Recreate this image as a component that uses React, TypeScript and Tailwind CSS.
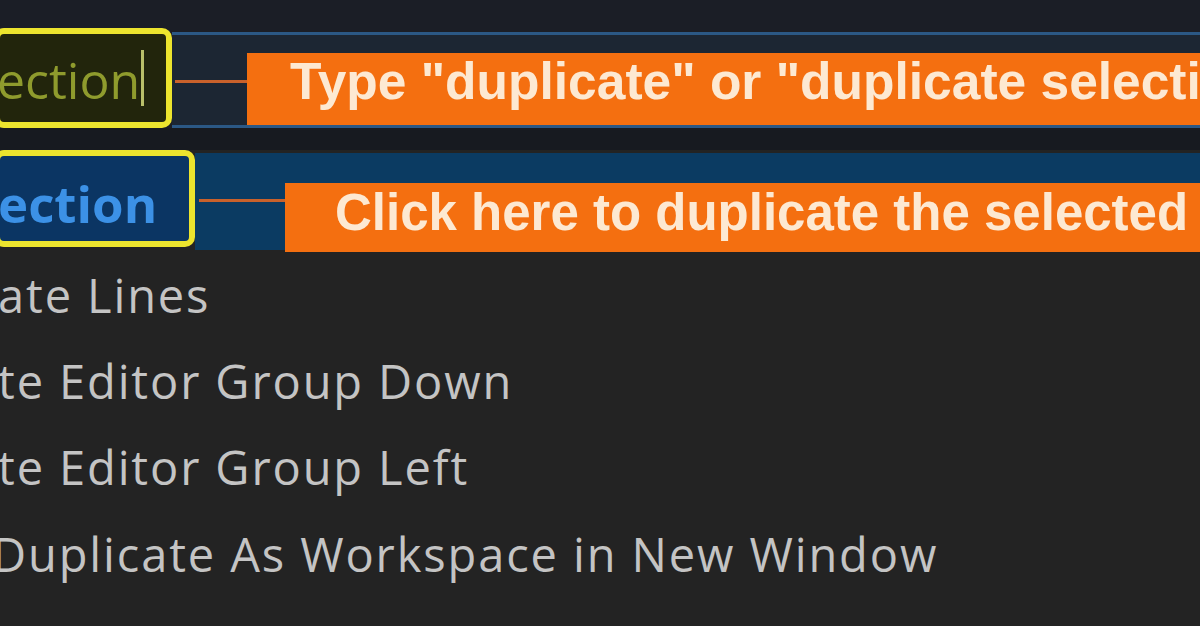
export default function App() {
  return (
    <div className="w-[1200px] h-[626px] overflow-hidden bg-[#232323] font-['Open_Sans',sans-serif]">
      {/* palette top edge */}
      <div className="h-[28px] bg-[#1b1e26]" />

      {/* input row */}
      <div className="flex h-[100px] bg-[#1b1e26]">
        <div className="-ml-[6px] w-[178px] shrink-0 rounded-[10px] border-[6px] border-[#ece42e] bg-[#22250c] flex items-center overflow-hidden">
          <span className="-ml-[3px] pt-[4px] text-[50px] leading-none text-[#8f9b2d] whitespace-nowrap">ection</span>
          <span className="ml-[1px] h-[56px] w-[3px] bg-[#b9bf6a]" />
        </div>
        <div className="flex-1 mt-[4px] border-y-[3px] border-[#2b5885] bg-[#1c2633] flex items-end">
          <div className="mb-[42px] ml-[3px] h-[3px] w-[72px] bg-[#c9612b]" />
          <div className="flex-1 h-[72px] bg-[#f46f10] pl-[43px] pt-[3px] overflow-hidden whitespace-nowrap font-['Liberation_Sans',Arial,sans-serif] font-bold text-[51.5px] leading-none text-[#fde9d2]">
            Type "duplicate" or "duplicate selection"
          </div>
        </div>
      </div>

      {/* gap between input and list */}
      <div className="h-[22px] bg-[#171a20]" />

      {/* selected row */}
      <div className="flex h-[105px]">
        <div className="-ml-[6px] w-[201px] h-[97px] shrink-0 rounded-[10px] border-[6px] border-[#ece42e] bg-[#0b3563] flex items-center overflow-hidden">
          <span className="-ml-[2px] pt-[10px] text-[51px] leading-none font-bold text-[#3c91e6] whitespace-nowrap">ection</span>
        </div>
        <div className="flex-1 mt-[3px] h-[97px] bg-[#0b3b62] flex items-start">
          <div className="mt-[46px] ml-[4px] h-[3px] w-[86px] bg-[#c9612b]" />
          <div className="flex-1 mt-[30px] h-[69px] bg-[#f46f10] pl-[50px] pt-[4px] overflow-hidden whitespace-nowrap font-['Liberation_Sans',Arial,sans-serif] font-bold text-[51px] leading-none text-[#fde9d2]">
            Click here to duplicate the selected line
          </div>
        </div>
      </div>

      {/* remaining list items */}
      <div className="-mt-[3px] flex flex-col text-[47px] font-medium tracking-[0.04em] text-[#c4c4c4] whitespace-nowrap">
        <div className="h-[86px] leading-[86px] -ml-[2px]">ate Lines</div>
        <div className="h-[86px] leading-[86px] -ml-[2px]">te Editor Group Down</div>
        <div className="h-[87px] leading-[86px] -ml-[2px]">te Editor Group Left</div>
        <div className="h-[86px] leading-[86px] -ml-[8px]">Duplicate As Workspace in New Window</div>
      </div>
    </div>
  );
}
